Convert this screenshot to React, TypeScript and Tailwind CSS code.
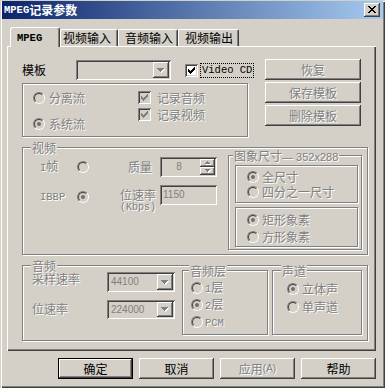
import React from "react";

const RAISED = "shadow-[inset_-1px_-1px_0_#404040,inset_1px_1px_0_#ffffff,inset_-2px_-2px_0_#808080]";
const SUNKEN = "shadow-[inset_1px_1px_0_#808080,inset_-1px_-1px_0_#ffffff,inset_2px_2px_0_#404040,inset_-2px_-2px_0_#d4d0c8]";
const ETCH = "border border-[#808080] shadow-[inset_1px_1px_0_#ffffff,1px_1px_0_#ffffff]";
const DIS = "text-[#808080] [text-shadow:1px_1px_0_#ffffff]";
const MONO = "font-['Liberation_Mono','Noto_Sans_CJK_SC',monospace]";
const SANS = "font-['Liberation_Sans',sans-serif]";

const CHECK =
  "M9 3h1v1H9z M8 4h2v1H8z M3 5h1v1H3z M7 5h3v1H7z M3 6h2v1H3z M6 6h3v1H6z M3 7h5v1H3z M4 8h3v1H4z M5 9h1v1H5z";
const TRI = "M0 0h7v1H0z M1 1h5v1H1z M2 2h3v1H2z M3 3h1v1H3z";
const UP = "M2 0h1v1H2z M1 1h3v1H1z M0 2h5v1H0z";
const DOWN = "M0 0h5v1H0z M1 1h3v1H1z M2 2h1v1H2z";
const XMARK =
  "M0 0h2v1H0z M6 0h2v1H6z M1 1h2v1H1z M5 1h2v1H5z M2 2h4v1H2z M3 3h2v1H3z M2 4h4v1H2z M1 5h2v1H1z M5 5h2v1H5z M0 6h2v1H0z M6 6h2v1H6z";

function Glyph({ d, w, h, disabled }: { d: string; w: number; h: number; disabled?: boolean }) {
  return (
    <svg width={w + 1} height={h + 1} viewBox={`0 0 ${w + 1} ${h + 1}`} shapeRendering="crispEdges" className="block">
      {disabled && <path transform="translate(1 1)" d={d} fill="#ffffff" />}
      <path d={d} fill={disabled ? "#808080" : "#000000"} />
    </svg>
  );
}

function Radio({ checked }: { checked?: boolean }) {
  return (
    <span className="relative block w-[12px] h-[12px] shrink-0 rounded-full border border-t-[#808080] border-l-[#808080] border-r-white border-b-white">
      <span className="absolute inset-0 rounded-full border border-t-[#404040] border-l-[#404040] border-r-[#d4d0c8] border-b-[#d4d0c8] bg-[#d4d0c8] flex items-center justify-center">
        {checked && <span className="block w-[4px] h-[4px] rounded-full bg-[#707070]" />}
      </span>
    </span>
  );
}

function Check({ enabled }: { enabled?: boolean }) {
  return (
    <span className={`block w-[13px] h-[13px] shrink-0 ${SUNKEN} ${enabled ? "bg-white" : "bg-[#d4d0c8]"}`}>
      <svg width="13" height="13" viewBox="0 0 13 13" shapeRendering="crispEdges" className="block">
        <path d={CHECK} fill={enabled ? "#000000" : "#808080"} />
      </svg>
    </span>
  );
}

function Group({
  className,
  label,
  labelPos,
  children,
}: {
  className: string;
  label?: React.ReactNode;
  labelPos?: string;
  children?: React.ReactNode;
}) {
  return (
    <div className={`relative shrink-0 ${ETCH} ${className}`}>
      {label && (
        <span className={`absolute -top-[6px] ${labelPos} px-[1px] bg-[#d4d0c8] leading-[12px] whitespace-nowrap ${DIS}`}>
          {label}
        </span>
      )}
      {children}
    </div>
  );
}

function Btn({
  className,
  disabled,
  def,
  children,
}: {
  className: string;
  disabled?: boolean;
  def?: boolean;
  children: React.ReactNode;
}) {
  return (
    <div
      className={`${className} shrink-0 bg-[#d4d0c8] flex items-center justify-center whitespace-nowrap ${
        def ? "border border-black" : ""
      } ${RAISED} ${disabled ? DIS : "text-black"}`}
    >
      {children}
    </div>
  );
}

function Combo({ className, value }: { className: string; value?: string }) {
  return (
    <div className={`${className} shrink-0 ${SUNKEN} bg-[#d4d0c8] p-[2px] flex`}>
      <div className={`flex-1 flex items-center pl-[2px] text-[#808080] ${SANS} text-[10px]`}>{value}</div>
      <div className={`w-[16px] ${RAISED} bg-[#d4d0c8] flex items-center justify-center`}>
        <Glyph d={TRI} w={7} h={4} disabled />
      </div>
    </div>
  );
}

function Spin() {
  return (
    <div className={`w-[57px] h-[20px] shrink-0 ${SUNKEN} bg-[#d4d0c8] p-[2px] flex`}>
      <div className={`flex-1 flex items-center justify-center pr-[4px] text-[#808080] ${SANS} text-[10px]`}>8</div>
      <div className="w-[15px] flex flex-col">
        <div className={`h-[8px] ${RAISED} bg-[#d4d0c8] flex items-center justify-center`}>
          <Glyph d={UP} w={5} h={3} disabled />
        </div>
        <div className={`h-[8px] ${RAISED} bg-[#d4d0c8] flex items-center justify-center`}>
          <Glyph d={DOWN} w={5} h={3} disabled />
        </div>
      </div>
    </div>
  );
}

function RadioRow({ checked, gap, children }: { checked?: boolean; gap: string; children: React.ReactNode }) {
  return (
    <div className={`h-[14px] flex items-center ${gap}`}>
      <Radio checked={checked} />
      <span className={`whitespace-nowrap leading-[12px] ${DIS}`}>{children}</span>
    </div>
  );
}

function Tab({ className, children }: { className: string; children: React.ReactNode }) {
  return (
    <div
      className={`${className} h-[17px] shrink-0 flex items-center bg-[#d4d0c8] border-l border-t border-white border-r border-r-[#404040] rounded-t-[2px] shadow-[inset_-1px_0_0_#808080] whitespace-nowrap`}
    >
      {children}
    </div>
  );
}

export default function App() {
  return (
    <div
      className={`w-[385px] h-[388px] bg-[#d4d0c8] flex flex-col pt-[1px] px-[2px] text-[12px] leading-[14px] text-black font-['Noto_Sans_CJK_SC',sans-serif] overflow-hidden shadow-[inset_1px_1px_0_#d4d0c8,inset_2px_2px_0_#ffffff,inset_-1px_-1px_0_#404040,inset_-2px_-2px_0_#808080]`}
    >
      {/* title bar */}
      <div className="h-[18px] shrink-0 flex items-center justify-between pl-[2px] pr-[3px] bg-[linear-gradient(to_right,#0a246a,#a6caf0)]">
        <div className="flex items-center text-white font-bold whitespace-nowrap">
          <span className={`${MONO} text-[10.5px]`}>MPEG</span>
          <span>记录参数</span>
        </div>
        <div className={`w-[16px] h-[14px] bg-[#d4d0c8] ${RAISED} flex items-center justify-center pb-[1px]`}>
          <svg width="8" height="7" viewBox="0 0 8 7" shapeRendering="crispEdges" className="block">
            <path d={XMARK} fill="#000000" />
          </svg>
        </div>
      </div>

      {/* tabs */}
      <div className="h-[19px] mt-[8px] ml-[8px] flex items-end shrink-0">
        <div className="relative z-10 w-[50px] h-[20px] -mb-[1px] pl-[6px] shrink-0 flex items-center bg-[#d4d0c8] border-l border-t border-white border-r border-r-[#404040] rounded-t-[3px] shadow-[inset_-1px_0_0_#808080]">
          <span className={`${MONO} text-[10.5px] font-bold`}>MPEG</span>
        </div>
        <Tab className="w-[58px] pl-[2px]">视频输入</Tab>
        <Tab className="w-[60px] pl-[6px]">音频输入</Tab>
        <Tab className="w-[61px] pl-[6px]">视频输出</Tab>
      </div>

      {/* tab panel */}
      <div className="ml-[5px] w-[369px] h-[305px] shrink-0 flex flex-col shadow-[inset_1px_1px_0_#ffffff,inset_-1px_-1px_0_#404040,inset_-2px_-2px_0_#808080]">
        {/* top section */}
        <div className="flex items-start pl-[15px] pt-[13px]">
          <div className="w-[243px] mt-[1px] flex flex-col shrink-0">
            <div className="h-[20px] flex items-center">
              <span className="w-[54px] shrink-0">模板</span>
              <Combo className="w-[95px] h-[20px]" />
              <span className="ml-[14px]">
                <Check enabled />
              </span>
              <span className={`ml-[2px] h-[15px] px-[1px] flex items-center border border-dotted border-black whitespace-nowrap ${MONO} text-[10.5px]`}>
                Video CD
              </span>
            </div>
            <Group className="mt-[3px] w-[226px] h-[54px] flex">
              <div className="w-[115px] pl-[10px] pt-[8px] flex flex-col shrink-0">
                <div className="h-[12px] flex items-center gap-[4px]">
                  <Radio />
                  <span className={`leading-[12px] ${DIS}`}>分离流</span>
                </div>
                <div className="mt-[14px] h-[12px] flex items-center gap-[4px]">
                  <Radio checked />
                  <span className={`leading-[12px] ${DIS}`}>系统流</span>
                </div>
              </div>
              <div className="pt-[7px] flex flex-col">
                <div className="h-[13px] flex items-center gap-[6px]">
                  <Check />
                  <span className={`leading-[12px] ${DIS}`}>记录音频</span>
                </div>
                <div className="mt-[4px] h-[13px] flex items-center gap-[6px]">
                  <Check />
                  <span className={`leading-[12px] ${DIS}`}>记录视频</span>
                </div>
              </div>
            </Group>
          </div>
          <div className="w-[96px] flex flex-col gap-[2px] shrink-0">
            <Btn className="h-[21px]" disabled>
              恢复
            </Btn>
            <Btn className="h-[21px]" disabled>
              保存模板
            </Btn>
            <Btn className="h-[21px]" disabled>
              删除模板
            </Btn>
          </div>
        </div>

        {/* video group */}
        <Group label="视频" labelPos="left-[8px]" className="mt-[10px] ml-[15px] w-[346px] h-[108px] flex items-start">
          <div className="w-[205px] flex flex-col shrink-0">
            <div className="mt-[9px] h-[20px] flex items-center">
              <span className={`w-[54px] pl-[17px] shrink-0 ${DIS}`}>
                <span className={`${MONO} text-[10.5px]`}>I</span>帧
              </span>
              <Radio />
              <span className="w-[39px] shrink-0" />
              <span className={`w-[32px] shrink-0 ${DIS}`}>质量</span>
              <Spin />
            </div>
            <div className="mt-[8px] h-[20px] flex items-start">
              <div className="h-[20px] mt-[2px] flex items-center shrink-0">
                <span className={`w-[54px] pl-[17px] shrink-0 ${DIS} ${MONO} text-[10.5px]`}>IBBP</span>
                <Radio checked />
              </div>
              <span className="w-[31px] shrink-0" />
              <div className={`w-[40px] mt-[3px] leading-[13px] shrink-0 whitespace-nowrap ${DIS}`}>
                <div>位速率</div>
                <div className={`${MONO} text-[10px]`}>(Kbps)</div>
              </div>
              <div className={`w-[57px] h-[20px] shrink-0 ${SUNKEN} bg-[#d4d0c8] flex items-center pl-[3px] text-[#808080] ${SANS} text-[10px]`}>
                1150
              </div>
            </div>
          </div>
          <Group
            label={
              <>
                图象尺寸<span className={`${SANS} text-[11px]`}>— 352x288</span>
              </>
            }
            labelPos="left-[4px]"
            className="mt-[7px] w-[134px] h-[95px] flex flex-col"
          >
            <Group className="ml-[6px] mt-[9px] w-[123px] h-[38px] flex flex-col pl-[11px] pt-[4px] gap-[1px]">
              <RadioRow checked gap="gap-[3px]">
                全尺寸
              </RadioRow>
              <RadioRow gap="gap-[3px]">四分之一尺寸</RadioRow>
            </Group>
            <Group className="ml-[6px] mt-[4px] w-[123px] h-[40px] flex flex-col pl-[11px] pt-[5px] gap-[3px]">
              <RadioRow checked gap="gap-[3px]">
                矩形象素
              </RadioRow>
              <RadioRow gap="gap-[3px]">方形象素</RadioRow>
            </Group>
          </Group>
        </Group>

        {/* audio group */}
        <Group label="音频" labelPos="left-[8px]" className="mt-[10px] ml-[15px] w-[346px] h-[76px] flex items-start">
          <div className="w-[159px] flex flex-col shrink-0">
            <div className="mt-[7px] h-[20px] flex items-start">
              <span className={`w-[84px] pl-[9px] leading-[12px] shrink-0 ${DIS}`}>采样速率</span>
              <Combo className="w-[68px] h-[20px] -mt-[1px]" value="44100" />
            </div>
            <div className="mt-[7px] h-[19px] flex items-start">
              <span className={`w-[84px] pl-[9px] mt-[3px] leading-[12px] shrink-0 ${DIS}`}>位速率</span>
              <Combo className="w-[68px] h-[19px]" value="224000" />
            </div>
          </div>
          <Group label="音频层" labelPos="left-[6px]" className="mt-[4px] w-[86px] h-[65px] flex flex-col pl-[8px] pt-[10px] gap-[3px]">
            <RadioRow gap="gap-[2px]">
              <span className={`${MONO} text-[10.5px]`}>1</span>层
            </RadioRow>
            <RadioRow checked gap="gap-[2px]">
              <span className={`${MONO} text-[10.5px]`}>2</span>层
            </RadioRow>
            <RadioRow gap="gap-[2px]">
              <span className={`${MONO} text-[10.5px]`}>PCM</span>
            </RadioRow>
          </Group>
          <Group label="声道" labelPos="left-[8px]" className="ml-[4px] mt-[4px] w-[90px] h-[65px] flex flex-col pl-[14px] pt-[11px] gap-[4px]">
            <RadioRow checked gap="gap-[3px]">
              立体声
            </RadioRow>
            <RadioRow gap="gap-[3px]">单声道</RadioRow>
          </Group>
        </Group>
      </div>

      {/* bottom buttons */}
      <div className="mt-[7px] ml-[56px] flex gap-[6px] shrink-0">
        <Btn className="w-[75px] h-[21px]" def>
          确定
        </Btn>
        <Btn className="w-[75px] h-[21px]">取消</Btn>
        <Btn className="w-[75px] h-[21px]" disabled>
          应用<span className={`${SANS} text-[10px]`}>(A)</span>
        </Btn>
        <Btn className="w-[75px] h-[21px]">帮助</Btn>
      </div>
    </div>
  );
}
